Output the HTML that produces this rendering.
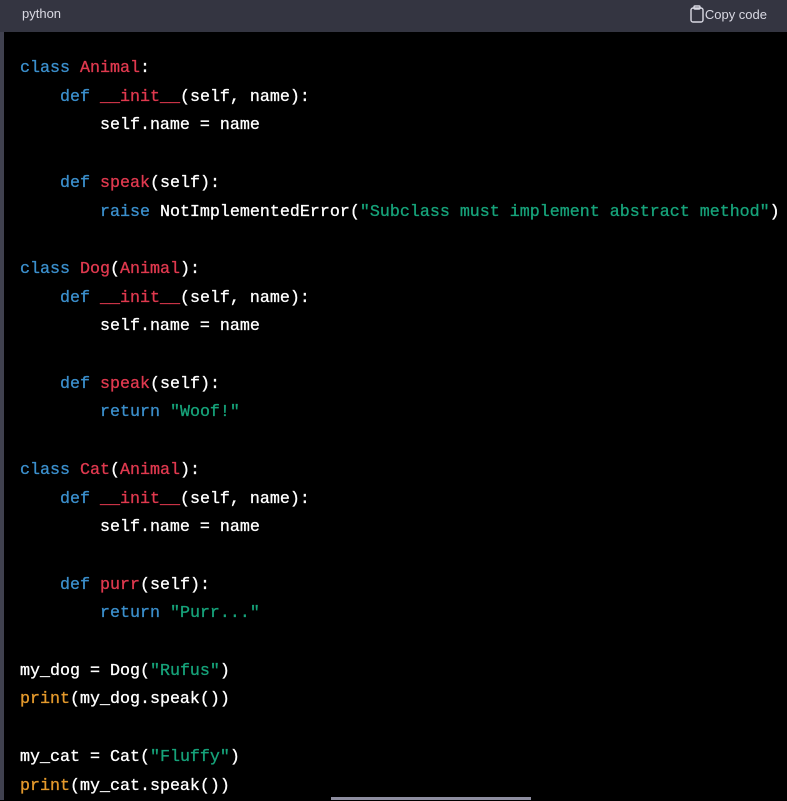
<!DOCTYPE html>
<html><head><meta charset="utf-8"><style>
html,body{margin:0;padding:0;width:787px;height:800px;overflow:hidden;background:#000}
.hdr{position:absolute;left:0;top:0;width:787px;height:32px;background:#343541;color:#d9d9e3;font-family:"Liberation Sans",sans-serif;font-size:13px}
.hdr .l{position:absolute;left:22px;top:6px}
.hdr .r{position:absolute;right:20px;top:5px;display:flex;align-items:center}
.side{position:absolute;left:0;top:32px;width:4px;height:768px;background:#40414f}
pre{position:absolute;left:20px;top:55px;margin:0;font-family:"Liberation Mono",monospace;font-size:16.67px;line-height:28.7px;color:#fff;white-space:pre;letter-spacing:0;-webkit-text-stroke:0.3px currentColor}
.k{color:#3b8fcc}.t{color:#e0394f}.s{color:#16a37a}.b{color:#e59a2c}
.sb{position:absolute;left:331px;top:797px;width:200px;height:3px;background:#8e8ea0}
</style></head><body>
<div class="hdr"><span class="l">python</span><span class="r"><svg width="16" height="18" viewBox="0 0 16 18" fill="none" stroke="#d9d9e3" stroke-width="1.4"><rect x="2" y="3" width="12" height="14" rx="2"/><rect x="5" y="1" width="6" height="3" rx="1"/></svg>Copy code</span></div>
<div class="side"></div>
<pre><span class="k">class</span> <span class="t">Animal</span>:
    <span class="k">def</span> <span class="t">__init__</span>(self, name):
        self.name = name

    <span class="k">def</span> <span class="t">speak</span>(self):
        <span class="k">raise</span> NotImplementedError(<span class="s">"Subclass must implement abstract method"</span>)

<span class="k">class</span> <span class="t">Dog</span>(<span class="t">Animal</span>):
    <span class="k">def</span> <span class="t">__init__</span>(self, name):
        self.name = name

    <span class="k">def</span> <span class="t">speak</span>(self):
        <span class="k">return</span> <span class="s">"Woof!"</span>

<span class="k">class</span> <span class="t">Cat</span>(<span class="t">Animal</span>):
    <span class="k">def</span> <span class="t">__init__</span>(self, name):
        self.name = name

    <span class="k">def</span> <span class="t">purr</span>(self):
        <span class="k">return</span> <span class="s">"Purr..."</span>

my_dog = Dog(<span class="s">"Rufus"</span>)
<span class="b">print</span>(my_dog.speak())

my_cat = Cat(<span class="s">"Fluffy"</span>)
<span class="b">print</span>(my_cat.speak())</pre>
<div class="sb"></div>
</body></html>
